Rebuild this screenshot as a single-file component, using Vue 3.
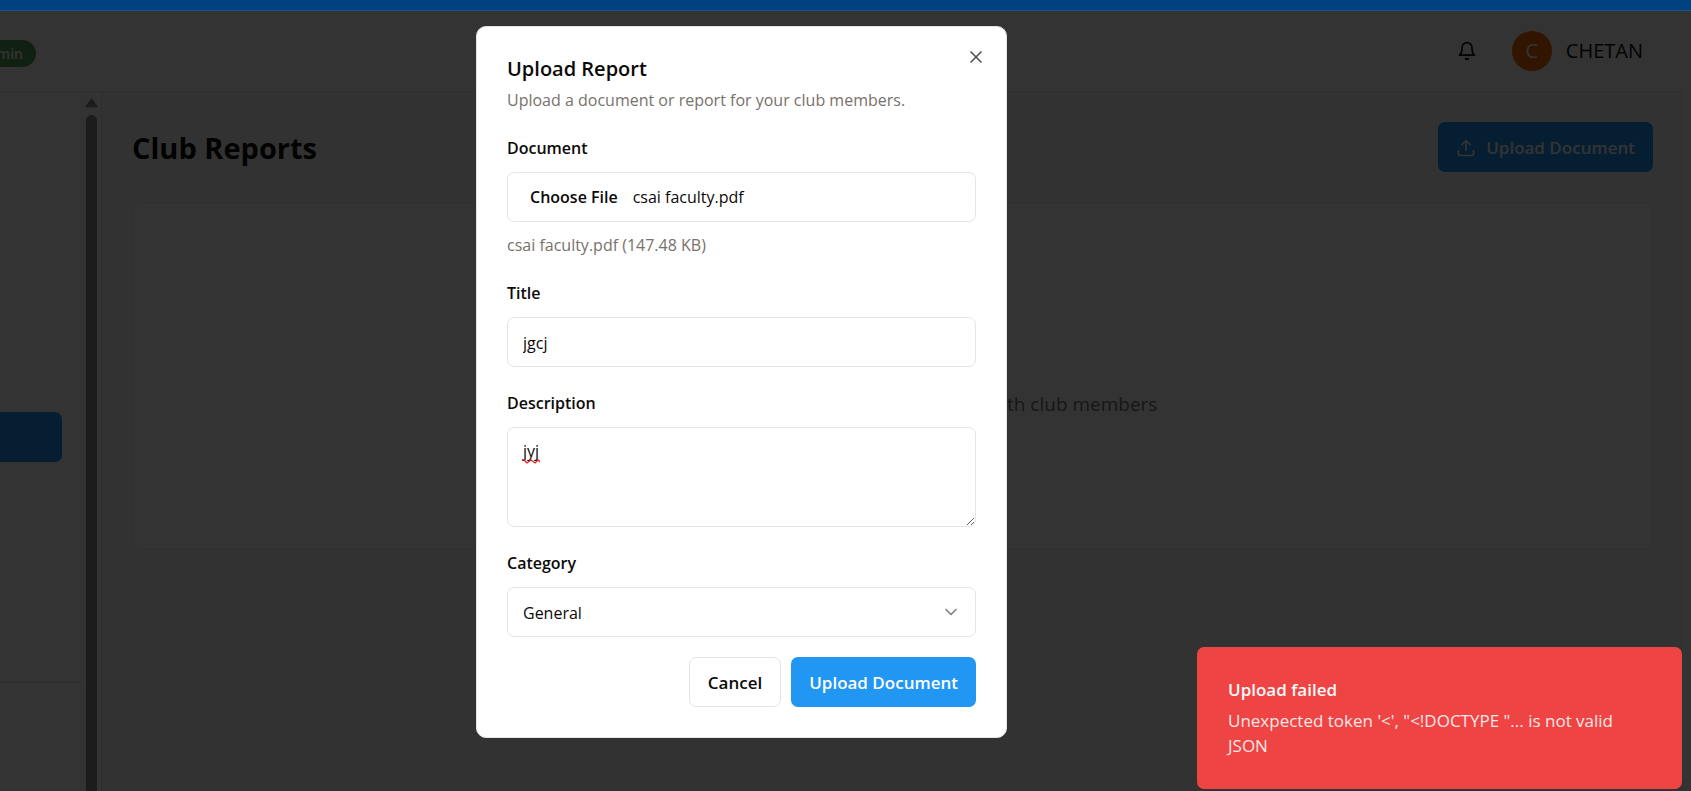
<script setup>
import { ref } from 'vue'

const fileName = ref('csai faculty.pdf')
const fileSize = ref('147.48 KB')
const title = ref('jgcj')
const description = ref('jyj')
const category = ref('General')
const categories = ['General', 'Finance', 'Events', 'Minutes']
const modalOpen = ref(true)
const toast = {
  title: 'Upload failed',
  message: `Unexpected token '<', "<!DOCTYPE "... is not valid JSON`,
}

function pickFile(event) {
  const file = event.target.files[0]
  if (!file) return
  fileName.value = file.name
  fileSize.value = `${(file.size / 1024).toFixed(2)} KB`
}
</script>

<template>
  <div class="app">
    <div class="strip"></div>
    <header class="header">
      <div class="role"><span class="badge">Admin</span></div>
      <div class="account">
        <button class="icon-button" type="button" aria-label="Notifications">
          <svg width="20" height="20" viewBox="0 0 24 24" fill="none" stroke="currentColor" stroke-width="2" stroke-linecap="round" stroke-linejoin="round">
            <path d="M6 8a6 6 0 0 1 12 0c0 7 3 9 3 9H3s3-2 3-9" />
            <path d="M10.3 21a1.94 1.94 0 0 0 3.4 0" />
          </svg>
        </button>
        <span class="avatar">C</span>
        <span class="user">CHETAN</span>
      </div>
    </header>

    <div class="body">
      <aside class="sidebar">
        <nav class="menu">
          <a class="active" href="#reports" aria-label="Reports"></a>
          <hr class="divider" />
        </nav>
        <div class="scrollbar">
          <svg width="13" height="10" viewBox="0 0 13 10"><path d="M6.5 1.500L11.500 8.500H1.500Z" fill="#8b8b8b" stroke="#8b8b8b" stroke-width="2" stroke-linejoin="round" /></svg>
          <div class="thumb"></div>
        </div>
      </aside>
      <main class="main">
        <div class="page-head">
          <h1>Club Reports</h1>
          <button class="primary" type="button">
            <svg width="20" height="20" viewBox="0 0 24 24" fill="none" stroke="currentColor" stroke-width="2" stroke-linecap="round" stroke-linejoin="round">
              <path d="M21 15v4a2 2 0 0 1-2 2H5a2 2 0 0 1-2-2v-4" />
              <path d="M17 8l-5-5-5 5" />
              <path d="M12 3v12" />
            </svg>
            Upload Document
          </button>
        </div>
        <section class="empty">
          <p>Upload documents and reports to share with club members</p>
        </section>
      </main>
    </div>

    <div v-if="modalOpen" class="overlay">
      <form class="modal" role="dialog" aria-labelledby="modal-title" @submit.prevent>
        <button class="close" type="button" aria-label="Close" @click="modalOpen = false">
          <svg width="20" height="20" viewBox="0 0 24 24" fill="none" stroke="currentColor" stroke-width="2" stroke-linecap="round">
            <path d="M18 6L6 18M6 6l12 12" />
          </svg>
        </button>
        <div class="modal-head">
          <h2 id="modal-title">Upload Report</h2>
          <p>Upload a document or report for your club members.</p>
        </div>

        <div class="fields">
          <div class="field">
            <label for="document">Document</label>
            <div class="control file">
              <span class="choose">Choose File</span>
              <span>{{ fileName }}</span>
              <input id="document" type="file" @change="pickFile" />
            </div>
            <p class="hint">{{ fileName }} ({{ fileSize }})</p>
          </div>

          <div class="field">
            <label for="title">Title</label>
            <input id="title" v-model="title" class="control" type="text" />
          </div>

          <div class="field">
            <label for="description">Description</label>
            <div class="wrap">
              <textarea id="description" v-model="description" class="control area"></textarea>
              <svg class="squiggle" width="18" height="5" viewBox="0 0 18 5" fill="none" stroke="#e02020" stroke-width="1.300">
                <path d="M0 1L2 1L5 4L9 1L13 4L16 1L18 3" />
              </svg>
            </div>
          </div>

          <div class="field">
            <label for="category">Category</label>
            <div class="wrap">
              <select id="category" v-model="category" class="control">
                <option v-for="c in categories" :key="c">{{ c }}</option>
              </select>
              <svg class="chevron" width="20" height="20" viewBox="0 0 24 24" fill="none" stroke="currentColor" stroke-width="2" stroke-linecap="round" stroke-linejoin="round">
                <path d="M6 9l6 6 6-6" />
              </svg>
            </div>
          </div>
        </div>

        <div class="actions">
          <button class="secondary" type="button" @click="modalOpen = false">Cancel</button>
          <button class="primary" type="submit">Upload Document</button>
        </div>
      </form>
    </div>

    <div class="toast" role="alert">
      <strong>{{ toast.title }}</strong>
      <p>{{ toast.message }}</p>
    </div>
  </div>
</template>

<style>
body {
  background: #333;
}
</style>

<style scoped>
.app,
.app * {
  box-sizing: border-box;
}
.app {
  position: relative;
  display: flex;
  flex-direction: column;
  height: 100vh;
  overflow: hidden;
  background: #fff;
  color: #0c0a09;
  font: 16px/24px 'Open Sans', 'Noto Sans', sans-serif;
}
h1,
h2,
p {
  margin: 0;
}
button,
input,
textarea,
select {
  font: inherit;
  color: inherit;
}
.strip {
  position: relative;
  z-index: 3;
  flex: none;
  height: 11px;
  background: #004280;
  border-bottom: 1px solid #1d528a;
}
.header {
  display: flex;
  flex: none;
  align-items: center;
  justify-content: space-between;
  height: 81px;
  margin-right: 8px;
  padding-right: 40px;
  border-bottom: 1px solid #e5e5e5;
}
.role {
  display: flex;
  justify-content: flex-end;
  width: 36px;
  margin-top: 4px;
}
.badge {
  flex: none;
  padding: 2px 13px 1px;
  border-radius: 14px;
  background: #52a056;
  color: #fff;
  font-size: 14px;
  font-weight: 600;
}
.account {
  display: flex;
  align-items: center;
}
.icon-button {
  display: flex;
  margin-right: 35px;
  padding: 0;
  border: 0;
  background: none;
}
.avatar {
  width: 40px;
  height: 40px;
  margin-right: 14px;
  border-radius: 50%;
  background: #f26a00;
  color: #fff;
  font-size: 20px;
  line-height: 40px;
  text-align: center;
}
.user {
  font-size: 20px;
  font-weight: 500;
}
.body {
  display: flex;
  flex: 1;
  min-height: 0;
}
.sidebar {
  display: flex;
  flex: none;
  width: 102px;
  border-right: 1px solid #e5e5e5;
}
.menu {
  flex: 1;
  padding-top: 320px;
}
.active {
  display: block;
  height: 50px;
  margin-right: 21px;
  border-radius: 0 7px 7px 0;
  background: #2196f3;
}
.divider {
  margin: 220px 0 0;
  border: 0;
  border-top: 1px solid #e0e0e0;
}
.scrollbar {
  display: flex;
  flex-direction: column;
  align-items: center;
  width: 17px;
  margin-right: 1px;
  padding-top: 6px;
}
.scrollbar svg {
  flex: none;
}
.thumb {
  flex: 1;
  width: 11px;
  margin-top: 7px;
  border-radius: 6px 6px 0 0;
  background: #8b8b8b;
}
.main {
  flex: 1;
  margin-right: 8px;
  padding: 30px 30px 0;
  background: #fafafa;
}
.page-head {
  display: flex;
  align-items: center;
  justify-content: space-between;
  margin-bottom: 30px;
}
h1 {
  padding-top: 2px;
  font-size: 29px;
  line-height: 40px;
  font-weight: 700;
}
.primary,
.secondary {
  display: flex;
  align-items: center;
  gap: 10px;
  height: 50px;
  padding: 2px 18px 0;
  border: 0;
  border-radius: 7px;
  font-size: 17px;
  font-weight: 600;
  white-space: nowrap;
}
.primary {
  background: #2196f3;
  color: #fff;
}
.secondary {
  border: 1px solid #e5e5e5;
  background: #fff;
}
.empty {
  display: flex;
  align-items: center;
  justify-content: center;
  height: 348px;
  padding-top: 56px;
  border: 1px solid #e8e8e8;
  border-radius: 10px;
  background: #fff;
  color: #78716c;
  font-size: 19px;
}
.overlay {
  position: absolute;
  inset: 0;
  z-index: 2;
  display: flex;
  align-items: flex-start;
  justify-content: center;
  padding: 26px 208px 0 0;
  background: rgba(0, 0, 0, 0.8);
}
.modal {
  position: relative;
  width: 531px;
  padding: 30px;
  border: 1px solid #e5e5e5;
  border-radius: 10px;
  background: #fff;
}
.close {
  position: absolute;
  top: 20px;
  right: 20px;
  display: flex;
  padding: 0;
  border: 0;
  background: none;
  opacity: 0.7;
}
h2 {
  font-size: 20px;
  line-height: 24px;
  font-weight: 600;
}
.modal-head p {
  margin-top: 7px;
}
.modal-head p,
.hint {
  color: #78716c;
}
.hint {
  line-height: 23px;
}
.fields {
  display: flex;
  flex-direction: column;
  gap: 24px;
  margin: 24px 0 20px;
}
.field {
  display: flex;
  flex-direction: column;
  gap: 12px;
}
.field label {
  font-weight: 600;
}
.control {
  display: block;
  width: 100%;
  height: 50px;
  margin: 0;
  padding: 2px 15px 0;
  border: 1px solid #e5e5e5;
  border-radius: 7px;
  outline: 0;
  background: #fff;
  appearance: none;
}
.file {
  position: relative;
  display: flex;
  align-items: center;
  gap: 15px;
  padding: 0 22px;
}
.choose {
  font-weight: 600;
}
.file input {
  position: absolute;
  inset: 0;
  width: 100%;
  opacity: 0;
}
.area {
  height: 100px;
  padding-top: 11px;
  resize: vertical;
}
.wrap {
  position: relative;
}
.squiggle {
  position: absolute;
  top: 32px;
  left: 15px;
}
.chevron {
  position: absolute;
  top: 15px;
  right: 15px;
  opacity: 0.5;
  pointer-events: none;
}
.actions {
  display: flex;
  justify-content: flex-end;
  gap: 10px;
}
.toast {
  position: absolute;
  right: 9px;
  bottom: 2px;
  z-index: 4;
  width: 485px;
  padding: 31px;
  border-radius: 7px;
  background: #ef4444;
  color: #fafafa;
  font-size: 17px;
}
.toast strong {
  display: block;
  margin-bottom: 6px;
  font-weight: 600;
}
.toast p {
  line-height: 25px;
  opacity: 0.9;
}
</style>
